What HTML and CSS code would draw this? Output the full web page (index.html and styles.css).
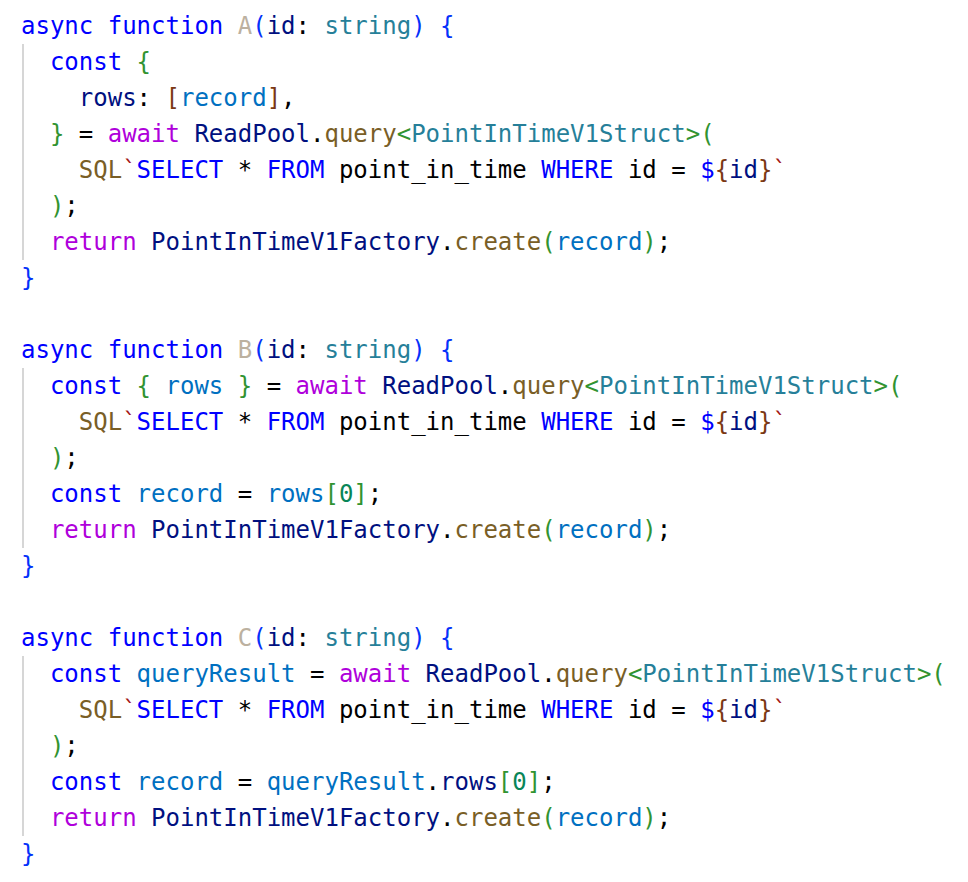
FILE: index.html
```html
<!DOCTYPE html>
<html>
<head>
<meta charset="utf-8">
<link rel="stylesheet" href="styles.css">
</head>
<body>
<div class="code">
<div class="fn">
<div class="ln"><span class="kw">async</span> <span class="kw">function</span> <span class="un">A</span><span class="b1">(</span><span class="v">id</span>: <span class="ty">string</span><span class="b1">)</span> <span class="b1">{</span></div>
<div class="body">
<div class="ln"><span class="kw">const</span> <span class="b2">{</span></div>
<div class="ln">  <span class="v">rows</span>: <span class="b3">[</span><span class="c">record</span><span class="b3">]</span>,</div>
<div class="ln"><span class="b2">}</span> = <span class="ctl">await</span> <span class="v">ReadPool</span>.<span class="f">query</span><span class="b2">&lt;</span><span class="ty">PointInTimeV1Struct</span><span class="b2">&gt;(</span></div>
<div class="ln">  <span class="f">SQL</span><span class="s">`</span><span class="kw">SELECT</span> * <span class="kw">FROM</span> point_in_time <span class="kw">WHERE</span> id = <span class="kw">$</span><span class="b3">{</span><span class="v">id</span><span class="b3">}</span><span class="s">`</span></div>
<div class="ln"><span class="b2">)</span>;</div>
<div class="ln"><span class="ctl">return</span> <span class="v">PointInTimeV1Factory</span>.<span class="f">create</span><span class="b2">(</span><span class="c">record</span><span class="b2">)</span>;</div>
</div>
<div class="ln"><span class="b1">}</span></div>
</div>
<div class="ln"> </div>
<div class="fn">
<div class="ln"><span class="kw">async</span> <span class="kw">function</span> <span class="un">B</span><span class="b1">(</span><span class="v">id</span>: <span class="ty">string</span><span class="b1">)</span> <span class="b1">{</span></div>
<div class="body">
<div class="ln"><span class="kw">const</span> <span class="b2">{</span> <span class="c">rows</span> <span class="b2">}</span> = <span class="ctl">await</span> <span class="v">ReadPool</span>.<span class="f">query</span><span class="b2">&lt;</span><span class="ty">PointInTimeV1Struct</span><span class="b2">&gt;(</span></div>
<div class="ln">  <span class="f">SQL</span><span class="s">`</span><span class="kw">SELECT</span> * <span class="kw">FROM</span> point_in_time <span class="kw">WHERE</span> id = <span class="kw">$</span><span class="b3">{</span><span class="v">id</span><span class="b3">}</span><span class="s">`</span></div>
<div class="ln"><span class="b2">)</span>;</div>
<div class="ln"><span class="kw">const</span> <span class="c">record</span> = <span class="c">rows</span><span class="b2">[</span><span class="n">0</span><span class="b2">]</span>;</div>
<div class="ln"><span class="ctl">return</span> <span class="v">PointInTimeV1Factory</span>.<span class="f">create</span><span class="b2">(</span><span class="c">record</span><span class="b2">)</span>;</div>
</div>
<div class="ln"><span class="b1">}</span></div>
</div>
<div class="ln"> </div>
<div class="fn">
<div class="ln"><span class="kw">async</span> <span class="kw">function</span> <span class="un">C</span><span class="b1">(</span><span class="v">id</span>: <span class="ty">string</span><span class="b1">)</span> <span class="b1">{</span></div>
<div class="body">
<div class="ln"><span class="kw">const</span> <span class="c">queryResult</span> = <span class="ctl">await</span> <span class="v">ReadPool</span>.<span class="f">query</span><span class="b2">&lt;</span><span class="ty">PointInTimeV1Struct</span><span class="b2">&gt;(</span></div>
<div class="ln">  <span class="f">SQL</span><span class="s">`</span><span class="kw">SELECT</span> * <span class="kw">FROM</span> point_in_time <span class="kw">WHERE</span> id = <span class="kw">$</span><span class="b3">{</span><span class="v">id</span><span class="b3">}</span><span class="s">`</span></div>
<div class="ln"><span class="b2">)</span>;</div>
<div class="ln"><span class="kw">const</span> <span class="c">record</span> = <span class="c">queryResult</span>.<span class="v">rows</span><span class="b2">[</span><span class="n">0</span><span class="b2">]</span>;</div>
<div class="ln"><span class="ctl">return</span> <span class="v">PointInTimeV1Factory</span>.<span class="f">create</span><span class="b2">(</span><span class="c">record</span><span class="b2">)</span>;</div>
</div>
<div class="ln"><span class="b1">}</span></div>
</div>
</div>
</body>
</html>
```
FILE: styles.css
```css
html, body {
  margin: 0;
  padding: 0;
  background: #ffffff;
}
.code {
  padding: 8px 0 0 21px;
  font-family: "DejaVu Sans Mono", "Liberation Mono", monospace;
  font-size: 24px;
  line-height: 36px;
  color: #000000;
}
.ln {
  white-space: pre;
  height: 36px;
}
.body {
  margin-left: 1px;
  border-left: 2px solid #d6d6d6;
  padding-left: calc(2ch - 3px);
}
.kw { color: #0000ff; }
.ctl { color: #af00db; }
.un { color: #bcb1a0; }
.v { color: #001080; }
.c { color: #0070c1; }
.ty { color: #267f99; }
.f { color: #795e26; }
.s { color: #a31515; }
.n { color: #098658; }
.b1 { color: #0431fa; }
.b2 { color: #319331; }
.b3 { color: #7b3814; }
```
